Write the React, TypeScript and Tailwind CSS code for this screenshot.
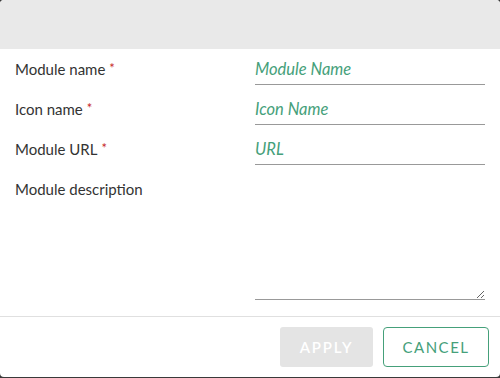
import React from "react";

const fields = [
  { label: "Module name", placeholder: "Module Name", required: true },
  { label: "Icon name", placeholder: "Icon Name", required: true },
  { label: "Module URL", placeholder: "URL", required: true },
];

export default function App() {
  return (
    <div className="w-[500px] h-[378px] bg-[#3a3a3a]" style={{ fontFamily: "Lato, 'Open Sans', sans-serif" }}>
      <div className="w-[500px] h-[377px] bg-white rounded-[4px] overflow-hidden flex flex-col">
        <div className="h-[49px] bg-[#e9e9e9]" />

        <div className="flex flex-col px-[15px] pt-[9px]">
          {fields.map((f) => (
            <div key={f.label} className="flex items-start h-[40px]">
              <label className="w-[240px] text-[15px] leading-[22px] text-[#333]">
                {f.label}
                <span className="relative -top-[2px] ml-[4px] text-[#c62828] text-[13px]">*</span>
              </label>
              <input
                placeholder={f.placeholder}
                className="w-[230px] h-[27px] pb-[4px] border-b border-[#999] outline-none text-[16.5px] italic text-[#333] placeholder:text-[#45a07a]"
              />
            </div>
          ))}

          <div className="flex items-start">
            <label className="w-[240px] text-[15px] leading-[22px] text-[#333]">Module description</label>
            <textarea className="w-[230px] h-[122px] border-b border-[#999] outline-none resize-y text-[14px]" />
          </div>
        </div>

        <div className="mt-[16px] border-t border-[#e0e0e0] flex justify-end gap-[10px] pt-[10px] pr-[11px]">
          <button
            disabled
            className="w-[93px] h-[40px] rounded-[3px] bg-[#e4e4e4] text-white text-[15px] tracking-[0.12em] font-semibold"
          >
            APPLY
          </button>
          <button className="w-[106px] h-[40px] rounded-[4px] border border-[#45a07a] text-[#45a07a] text-[15px] tracking-[0.1em]">
            CANCEL
          </button>
        </div>
      </div>
    </div>
  );
}
